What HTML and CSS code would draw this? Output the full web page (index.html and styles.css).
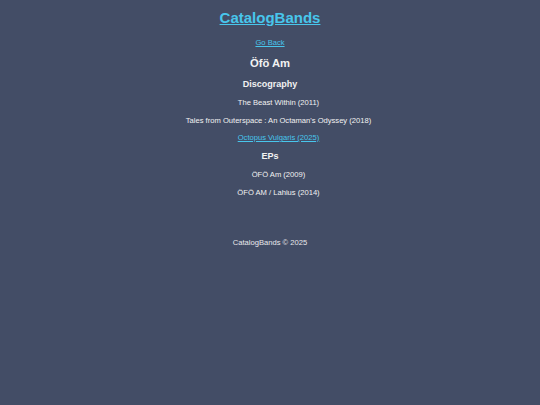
FILE: index.html
```html
<!DOCTYPE html>
<html lang="en">
<head>
  <meta charset="UTF-8" />
  <meta name="viewport" content="width=device-width, initial-scale=1.0" />
  <title>CatalogBands</title>
  <link rel="stylesheet" href="styles.css">
</head>
<body>
  <header class="site-header">
    <h1><a href="#">CatalogBands</a></h1>
  </header>

  <main class="band">
    <a class="back" href="#">Go Back</a>
    <h2 class="band-name">Öfö Am</h2>

    <!-- Discografía -->
    <h3 class="section-title">Discography</h3>
    <ul class="album-list">
      <li>The Beast Within (2011)</li>
      <li>Tales from Outerspace : An Octaman's Odyssey (2018)</li>
      <li><a href="#">Octopus Vulgaris (2025)</a></li>
    </ul>

    <!-- EPs -->
    <h3 class="section-title eps">EPs</h3>
    <ul class="album-list">
      <li>ÖFÖ Am (2009)</li>
      <li>ÖFÖ AM / Lahius (2014)</li>
    </ul>
  </main>

  <footer class="site-footer">CatalogBands © 2025</footer>
</body>
</html>
```

FILE: styles.css
```css
/* general */
body {
  margin: 0;
  background: #434d66;
  color: #f2f2f2;
  font-family: "Liberation Sans", Arial, sans-serif;
  font-size: 7.6px;
  text-align: center;
}

a {
  color: #48c6ec;
}

/* header */
.site-header h1 {
  margin: 8px 0 0;
  font-size: 15px;
  line-height: 20px;
}

/* band page */
.band {
  display: flex;
  flex-direction: column;
  align-items: center;
}

.back {
  margin-top: 9px;
  line-height: 12px;
}

.band-name {
  margin: 7px 0 0;
  font-size: 11.25px;
  line-height: 14px;
}

.section-title {
  margin: 8px 0 0;
  font-size: 9px;
  line-height: 12px;
}

.section-title.eps {
  margin-top: 6px;
}

.album-list {
  list-style: none;
  margin: 7px 0 0;
  padding: 0 0 0 17px;
  display: flex;
  flex-direction: column;
  align-items: center;
  gap: 5.5px;
}

.album-list li {
  line-height: 12px;
}

/* footer */
.site-footer {
  margin-top: 38.5px;
  line-height: 12px;
  color: #e8e8ec;
}
```
